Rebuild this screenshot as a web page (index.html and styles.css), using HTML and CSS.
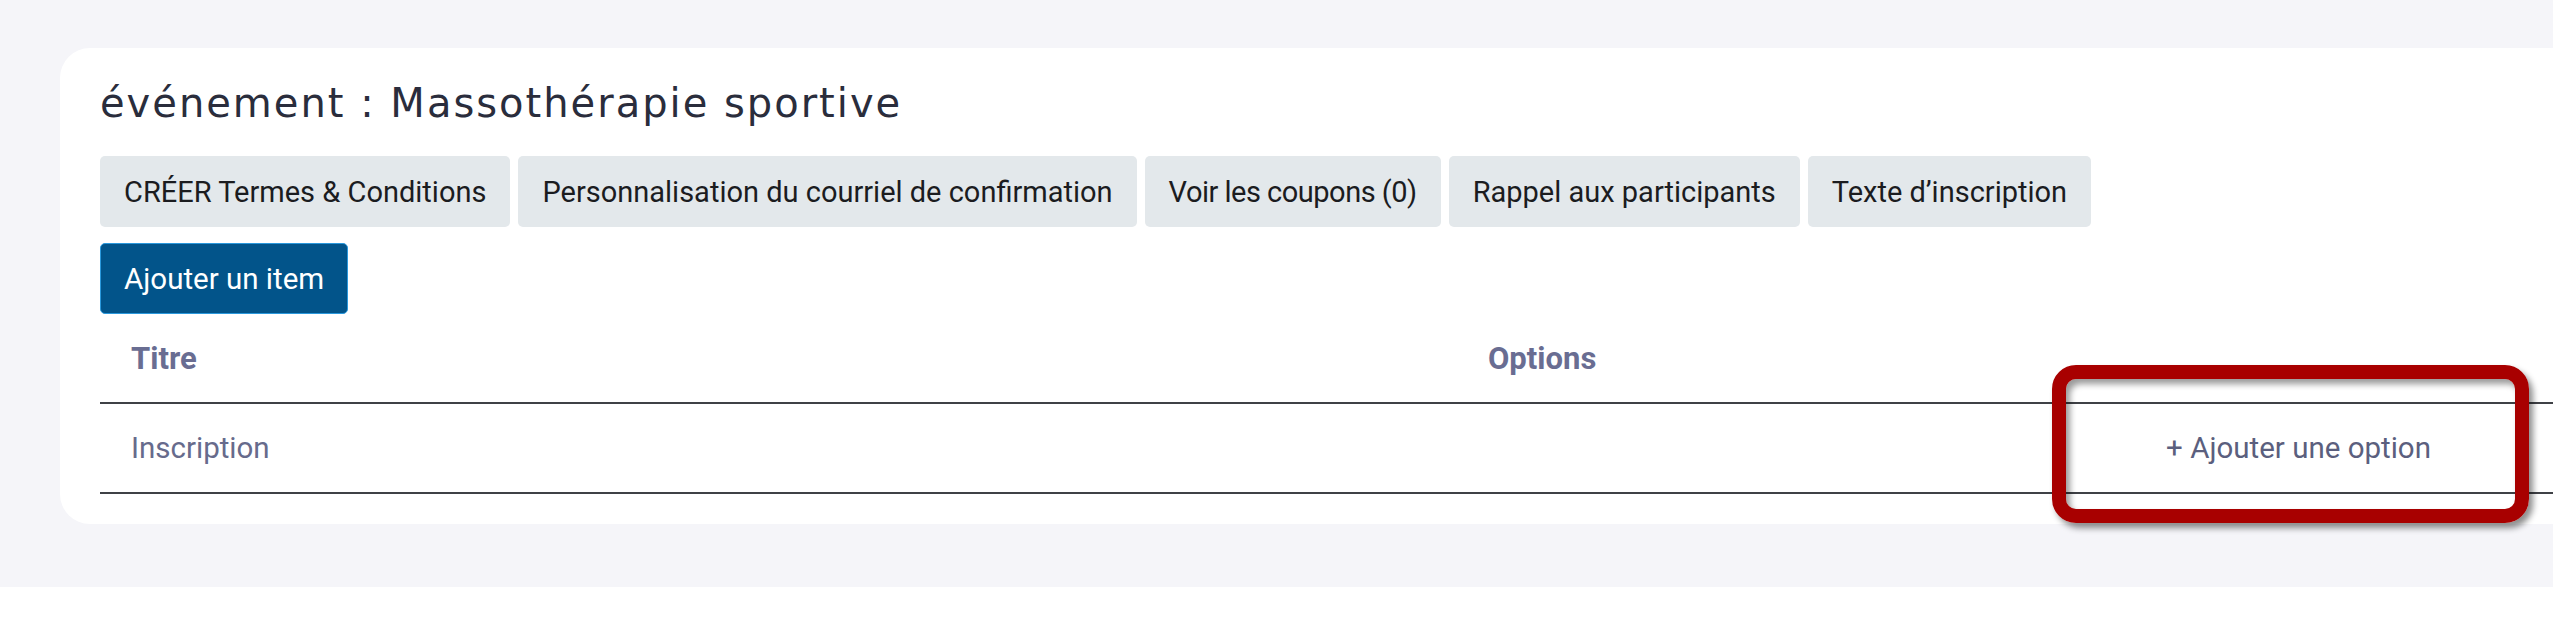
FILE: index.html
```html
<!DOCTYPE html>
<html lang="fr">
<head>
<meta charset="utf-8">
<title>événement : Massothérapie sportive</title>
<link rel="stylesheet" href="styles.css">
</head>
<body>
<div class="page">
  <div class="card">
    <h1 class="title">événement : Massothérapie sportive</h1>
    <div class="actions">
      <button class="btn btn-light">CRÉER Termes &amp; Conditions</button>
      <button class="btn btn-light">Personnalisation du courriel de confirmation</button>
      <button class="btn btn-light btn-tight">Voir les coupons (0)</button>
      <button class="btn btn-light">Rappel aux participants</button>
      <button class="btn btn-light">Texte d’inscription</button>
    </div>
    <div class="add-row">
      <button class="btn btn-primary">Ajouter un item</button>
    </div>
    <div class="table">
      <div class="row head">
        <div class="cell">Titre</div>
        <div class="cell">Options</div>
      </div>
      <div class="row">
        <div class="cell">Inscription</div>
        <div class="cell cell-action"><span class="add-option">+ Ajouter une option</span></div>
      </div>
    </div>
  </div>
  <div class="highlight"></div>
</div>
</body>
</html>
```
FILE: styles.css
```css
html, body {
  margin: 0;
  padding: 0;
  overflow: hidden;
  background: #ffffff;
}
body {
  font-family: Roboto, "Liberation Sans", sans-serif;
}
.page {
  position: relative;
  height: 587px;
  box-sizing: border-box;
  padding: 48px 0 0 60px;
  background: #f5f5f9;
}
.card {
  width: 2540px;
  height: 476px;
  box-sizing: border-box;
  padding: 32px 0 0 40px;
  background: #ffffff;
  border-radius: 30px;
}
.title {
  margin: 0;
  height: 46px;
  line-height: 46px;
  font-family: "DejaVu Sans", sans-serif;
  font-weight: 400;
  font-size: 40px;
  letter-spacing: 2px;
  color: #2a2d3c;
  white-space: nowrap;
}
.actions {
  display: flex;
  gap: 8px;
  margin-top: 30px;
}
.btn {
  display: inline-flex;
  align-items: center;
  height: 71px;
  box-sizing: border-box;
  padding: 0 24px;
  border: 0;
  border-radius: 5px;
  font-family: Roboto, "Liberation Sans", sans-serif;
  font-size: 29px;
  white-space: nowrap;
}
.btn-light {
  background: #e3e8eb;
  color: #1b1c1f;
}
.btn-tight {
  letter-spacing: -0.5px;
}
.add-row {
  margin-top: 16px;
  display: flex;
}
.btn-primary {
  background: #02548a;
  color: #ffffff;
  border: 1px solid #2a98dc;
  padding: 0 23px;
  font-size: 29.5px;
}
.table {
  width: 2500px;
}
.row {
  display: grid;
  grid-template-columns: 1357px 1fr;
  height: 88px;
  border-bottom: 2px solid #3f4146;
}
.cell {
  display: flex;
  align-items: center;
  padding-left: 31px;
  font-size: 29.5px;
  color: #676b8c;
}
.head .cell {
  font-weight: 700;
  font-size: 31px;
  color: #696d92;
}
.cell-action {
  justify-content: flex-end;
  padding-right: 169px;
}
.add-option {
  color: #5b5f7e;
}
.highlight {
  position: absolute;
  left: 2052px;
  top: 365px;
  width: 477px;
  height: 158px;
  box-sizing: border-box;
  border: 14px solid #a80000;
  border-radius: 24px;
  box-shadow: 4px 5px 6px rgba(0, 0, 0, 0.45), inset 4px 5px 6px rgba(0, 0, 0, 0.4);
}
```
